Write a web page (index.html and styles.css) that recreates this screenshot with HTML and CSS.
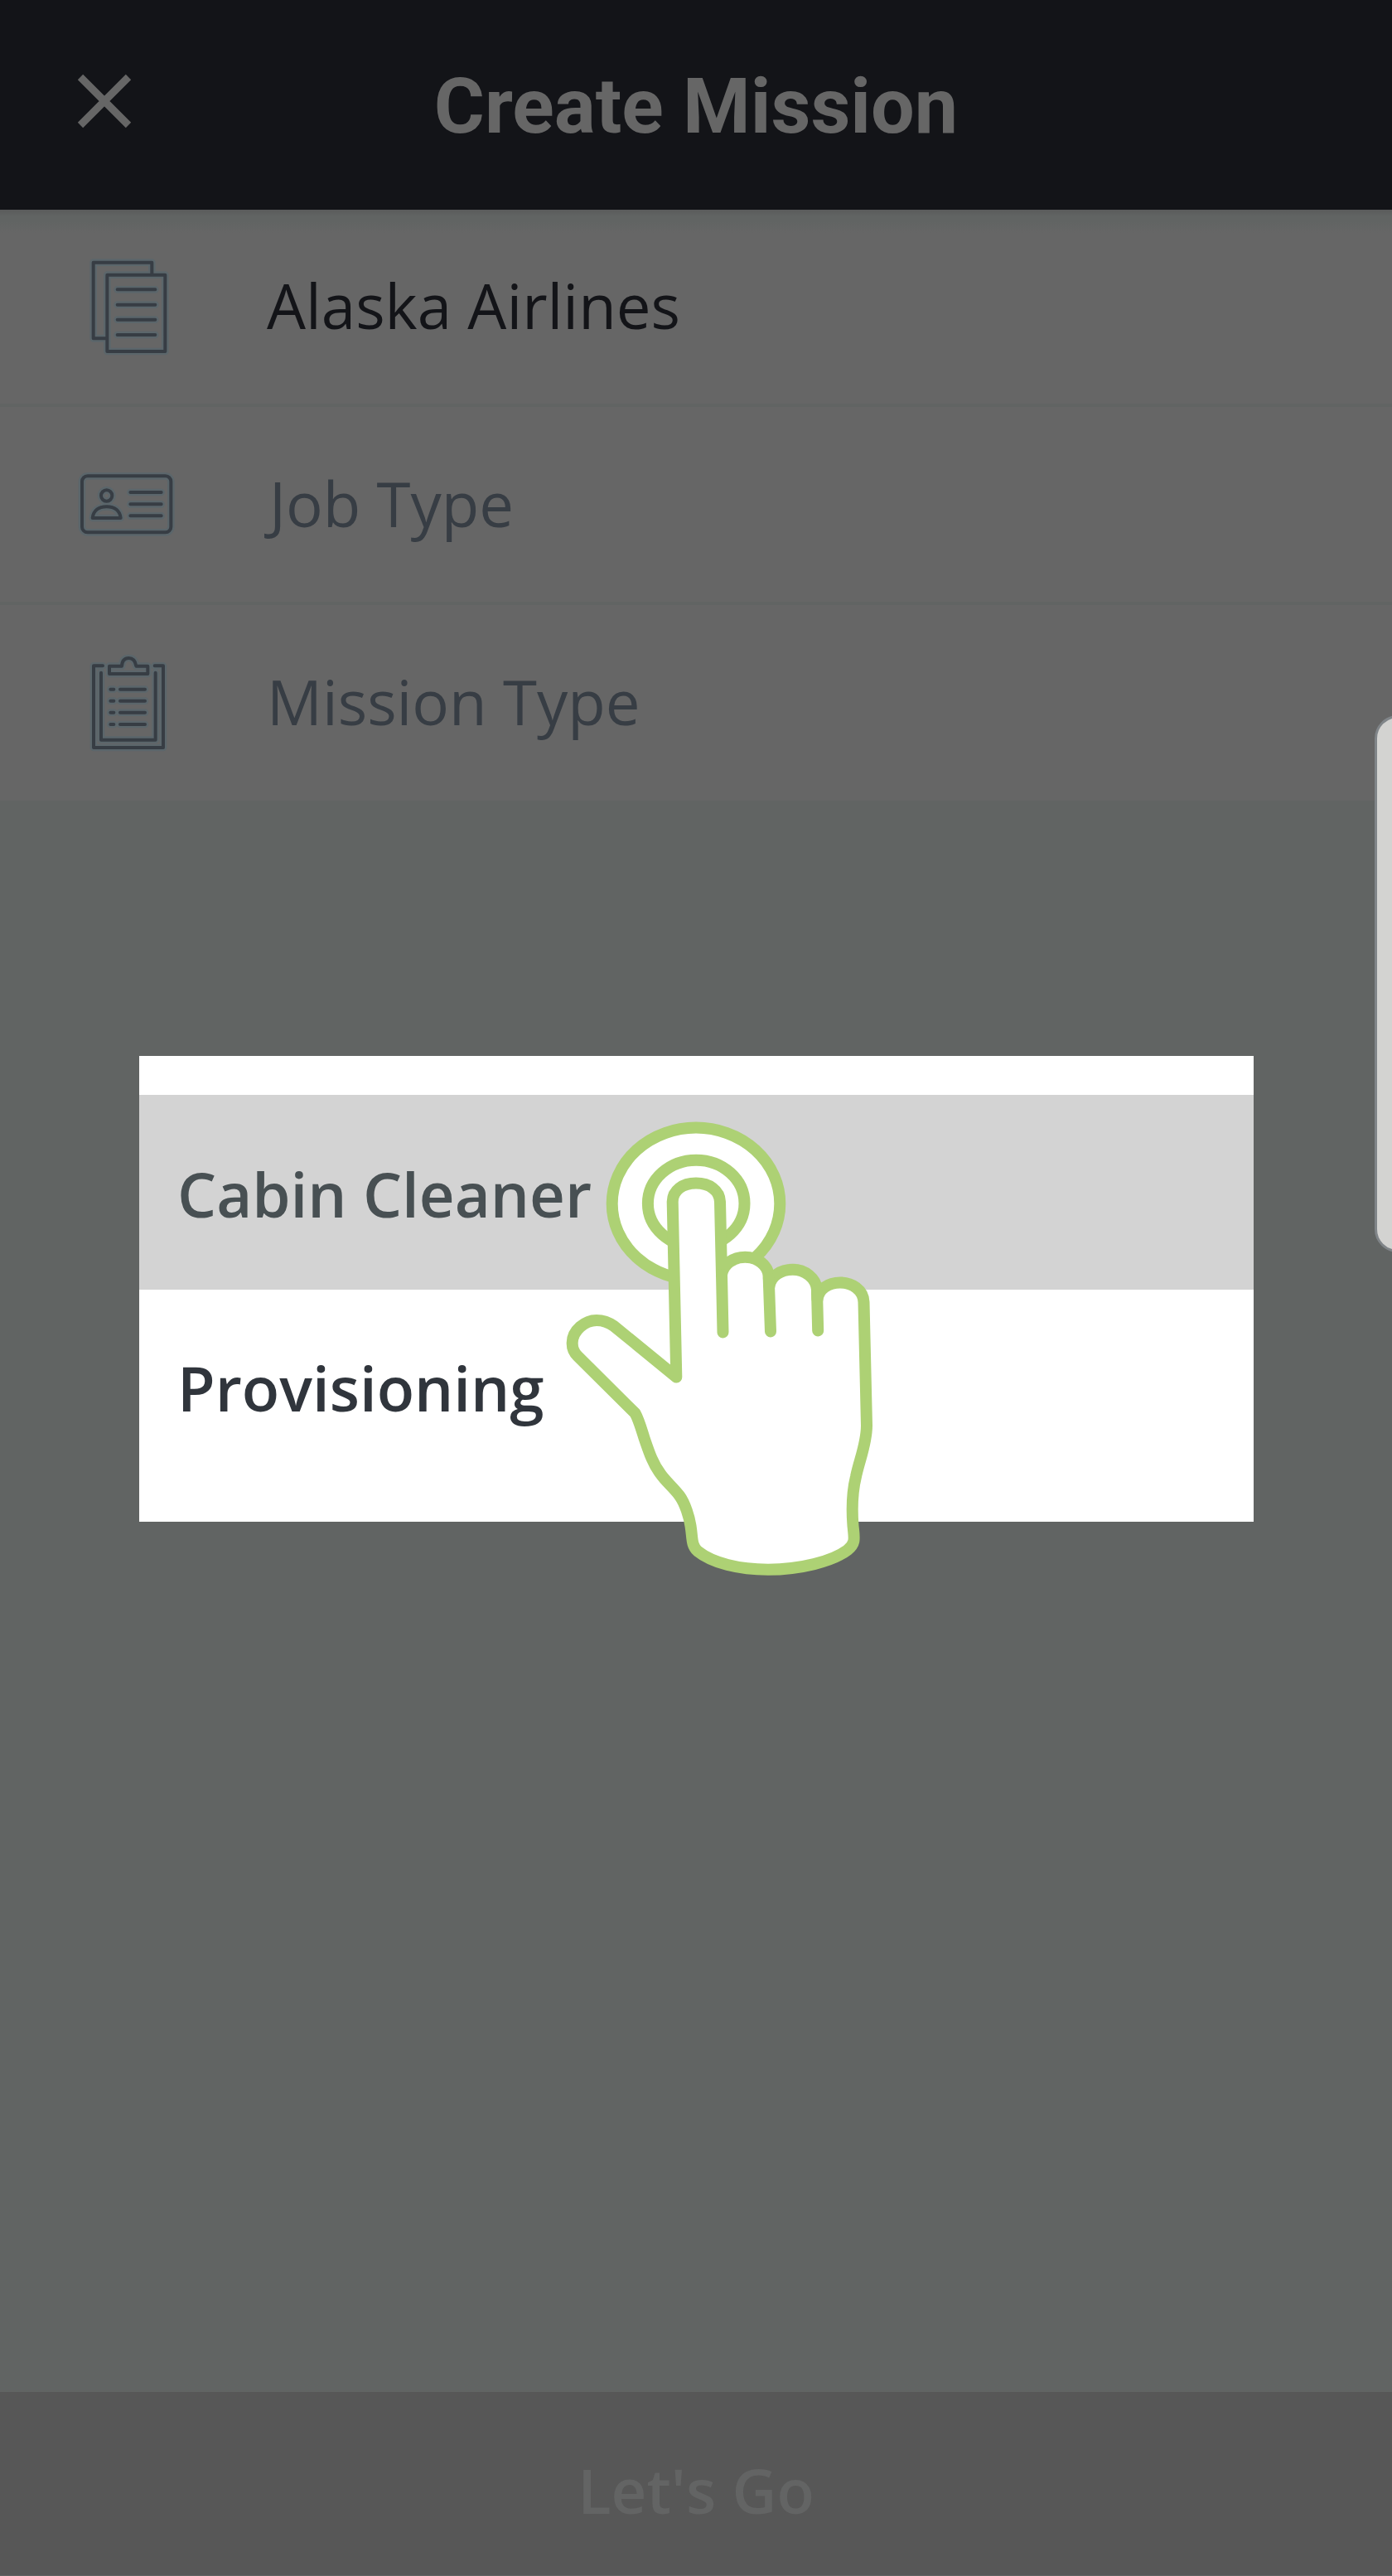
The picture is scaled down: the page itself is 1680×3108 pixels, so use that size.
FILE: index.html
```html
<!DOCTYPE html>
<html lang="en">
<head>
<meta charset="utf-8">
<title>Create Mission</title>
<link rel="stylesheet" href="styles.css">
</head>
<body>
<div class="screen">
  <header class="header">
    <svg class="close" viewBox="0 0 66 66"><path d="M4 4L62 62M62 4L4 62"/></svg>
    <h1 class="title">Create Mission</h1>
  </header>
  <main class="form">
    <div class="row filled">
      <svg class="icon" viewBox="0 0 480 480">
        <defs><g id="docs"><path d="M310 122V80H98V355H148M148 125H358V402H148ZM185 178H322M185 233H322M185 287H322M185 342H322"/></g></defs>
        <use href="#docs" class="halo"/><use href="#docs"/>
      </svg>
      <span class="label">Alaska Airlines</span>
    </div>
    <div class="row">
      <svg class="icon" viewBox="0 0 480 480">
        <defs><g id="card"><rect x="57" y="136" width="322" height="204" rx="20"/><circle cx="146" cy="207" r="20"/><path d="M95 288C98 262 116 247 146 247S194 262 197 288ZM232 195H344M232 238H344M232 280H344"/></g></defs>
        <use href="#card" class="halo"/><use href="#card"/>
      </svg>
      <span class="label job">Job Type</span>
    </div>
    <div class="row">
      <svg class="icon" viewBox="0 0 480 480">
        <defs><g id="board"><path d="M132 100H99V396H351V100H320M126 125V368H323V125M156 101H201C202 82 210 72 226 72S250 82 253 101H295V129H156ZM160 185H172M160 227H172M160 269H172M160 312H172M195 185H285M195 227H285M195 269H285M195 312H285"/></g></defs>
        <use href="#board" class="halo"/><use href="#board"/>
      </svg>
      <span class="label">Mission Type</span>
    </div>
  </main>
  <footer class="footer">Let's Go</footer>

  <div class="handle"></div>
  <div class="dialog">
    <div class="option selected">Cabin Cleaner</div>
    <div class="option">Provisioning</div>
  </div>
  <svg class="hand" viewBox="0 0 420 600">
    <ellipse cx="180" cy="122.3" rx="101.3" ry="91.7"/>
    <ellipse cx="180.2" cy="122" rx="58.3" ry="52.3"/>
    <path d="M156.3 331.5L151.7 120C152 106 164 97.6 180 97.6S208.500 106 209 120L211 208C213 195 225 186.800 239.300 186.800S267 196 267.700 210L268.500 222C270 210 282 201.700 296.700 201.700S325 212 326 226L326.500 238C328 225 340 217.400 354 217.400S382 226 382.500 241L386 390C386 412 377 432 373 451.600C369 468 368 492 369.500 511C371 526 373 532 363 540C345 554 305 563.700 267 563.700C232 563.700 200 556 182 541.500C174 534 176 526 173.500 511C172 501 167 484 160 474.500C152 464 144 458 137 448C128 436 124 424 117.500 405C114 394 111 383 106.500 375L37 306C31 300 30.500 295 30.700 290C31 275 46 263 60 263C68 263 74 265 81 270Z"/>
    <path d="M211 208L212.500 277.500M267.700 212L270 276.500M326 228L327.200 275.500"/>
  </svg>
</div>
</body>
</html>
```
FILE: styles.css
```css
* { box-sizing: border-box; margin: 0; padding: 0; }
body { background: #616463; }
.screen {
  position: relative;
  width: 1680px;
  height: 3108px;
  overflow: hidden;
  display: flex;
  flex-direction: column;
  background: #616463;
  font-family: "Open Sans", "Noto Sans", sans-serif;
  font-size: 74.4px;
}
.header {
  display: grid;
  grid-template-columns: 252px 1fr 252px;
  align-items: center;
  height: 253px;
  background: #131418;
}
.close {
  width: 66px;
  height: 66px;
  margin: -9px 0 0 93px;
  fill: none;
  stroke: #666;
  stroke-width: 9;
}
.title {
  padding-top: 2px;
  font: 700 93.4px/110px Roboto, sans-serif;
  color: #666;
  text-align: center;
  white-space: nowrap;
}
.form { flex: 1; }
.row {
  display: flex;
  align-items: center;
  height: 239px;
  padding-left: 80px;
  background: #666;
  border-bottom: 4px solid #616463;
}
.row:first-child {
  height: 238px;
  background: linear-gradient(#5a5b5b, #616463 8px, #616463 14px, #666 28px);
}
.row:last-child { height: 236px; border-bottom: 0; }
.row:last-child .icon { margin-top: 4px; }
.icon {
  width: 160px;
  height: 160px;
  margin-right: 82px;
  fill: none;
  stroke: #373d44;
  stroke-width: 12;
  stroke-linejoin: round;
  stroke-linecap: round;
}
.halo { stroke: #5b666b; stroke-width: 26; }
.label {
  padding-bottom: 4px;
  color: #373d44;
  line-height: 100px;
  white-space: nowrap;
}
.job { padding-left: 3px; }
.filled .label { color: #131418; }
.footer {
  height: 222px;
  padding-top: 68px;
  background: #575757;
  border-bottom: 1px solid #616463;
  color: #636464;
  font-weight: 600;
  line-height: 100px;
  text-align: center;
}
.handle {
  position: absolute;
  left: 1659px;
  top: 863px;
  width: 60px;
  height: 648px;
  border: 3px solid #808589;
  border-radius: 28px;
  background: #d3d3d1;
}
.dialog {
  position: absolute;
  left: 168px;
  top: 1274px;
  width: 1345px;
  height: 562px;
  padding-top: 47px;
  background: #fff;
}
.option {
  display: flex;
  align-items: center;
  height: 235px;
  padding-left: 46px;
  color: #30353c;
  font-weight: 600;
  line-height: 100px;
  white-space: nowrap;
}
.selected { padding-top: 2px; background: #d3d3d3; color: #485053; }
.hand {
  position: absolute;
  left: 660px;
  top: 1330px;
  width: 420px;
  height: 600px;
  fill: #fff;
  stroke: #add174;
  stroke-width: 14;
  stroke-linejoin: round;
  stroke-linecap: round;
}
```
